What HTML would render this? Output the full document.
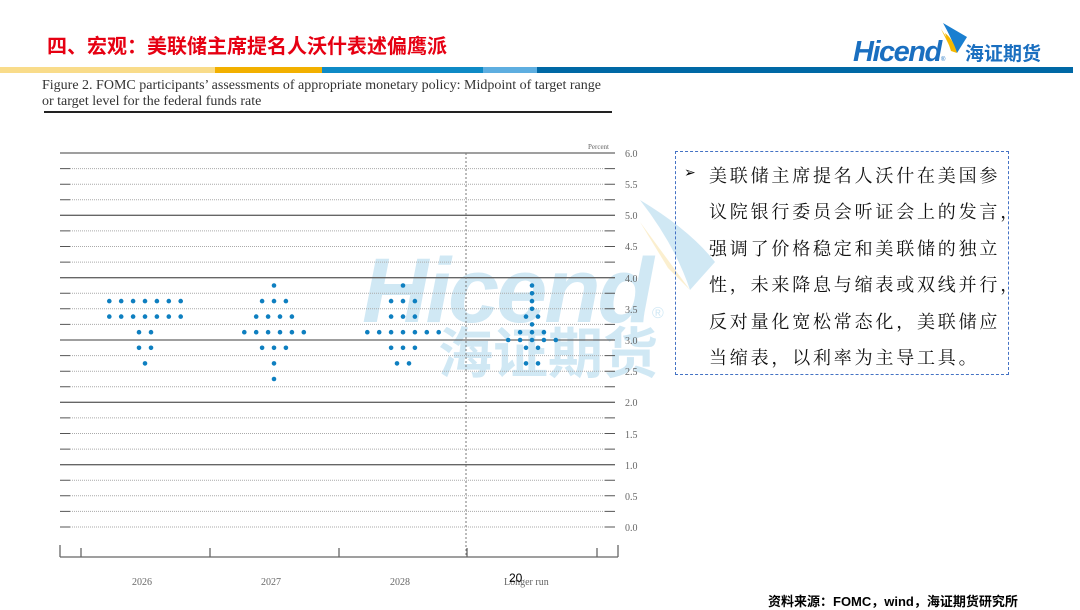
<!DOCTYPE html>
<html><head><meta charset="utf-8">
<style>
html,body{margin:0;padding:0;background:#fff;}
body{width:1080px;height:607px;position:relative;overflow:hidden;font-family:"Liberation Sans","Noto Sans CJK SC",sans-serif;}
.abs{position:absolute;}
</style></head><body>
<div class="abs" style="left:47px;top:30px;font-size:20px;font-weight:bold;color:#e60012;white-space:nowrap;">四、宏观：美联储主席提名人沃什表述偏鹰派</div>
<svg class="abs" style="left:845px;top:15px" width="220" height="55">
<path d="M98 8 L122 22 L112 38 Q106 22 98 8Z" fill="#1a7fd0"/>
<path d="M96 14 L112 38 L104 30 Q100 22 96 14Z" fill="#f5b800"/>
<path d="M100 18 Q108 24 112 38 L106 36 Z" fill="#f5b800"/>
<text x="8" y="46" font-family="Liberation Sans" font-size="29" font-style="italic" font-weight="bold" fill="#1a6fc0" letter-spacing="-1.5">Hicend</text>
<text x="96" y="46" font-size="6" fill="#1a6fc0">®</text>
<text x="120" y="45" font-family="Noto Sans CJK SC" font-size="19" font-weight="bold" fill="#1a6fc0">海证期货</text>
</svg>
<div class="abs" style="left:0;top:67px;height:6px;width:215px;background:#f9dc8a"></div>
<div class="abs" style="left:215px;top:67px;height:6px;width:107px;background:#f2b000"></div>
<div class="abs" style="left:322px;top:67px;height:6px;width:161px;background:#0e8ac6"></div>
<div class="abs" style="left:483px;top:67px;height:6px;width:54px;background:#5eaee0"></div>
<div class="abs" style="left:537px;top:67px;height:6px;width:536px;background:#0068a5"></div>
<div class="abs" style="left:42px;top:78px;font-family:'Liberation Serif',serif;font-size:14px;line-height:15.5px;color:#333;white-space:nowrap;">Figure 2. FOMC participants’ assessments of appropriate monetary policy: Midpoint of target range<br>or target level for the federal funds rate</div>
<div class="abs" style="left:44px;top:111px;width:568px;height:2px;background:#222"></div>
<svg class="abs" style="left:0;top:0" width="1080" height="607">
<g opacity="0.4">
<text x="362" y="322" font-family="Liberation Sans" font-size="92" font-style="italic" font-weight="bold" fill="#8cc6e6" letter-spacing="-3">Hicend</text>
<text x="652" y="318" font-size="16" fill="#8cc6e6">®</text>
<text x="438" y="373" font-family="Noto Sans CJK SC" font-size="55" font-weight="bold" fill="#8cc6e6">海证期货</text>
<path d="M640 200 Q690 230 715 262 L690 290 Q675 245 640 200Z" fill="#8cc6e6"/>
<path d="M640 222 L690 290 L668 268 Z" fill="#f6d889"/>
</g>
</svg>
<svg class="abs" style="left:0;top:0" width="1080" height="607" font-family="Liberation Serif">
<g stroke="#aaa" stroke-width="1" stroke-dasharray="1,1">
<line x1="70" x2="605" y1="511.4" y2="511.4"/><line x1="70" x2="605" y1="495.8" y2="495.8"/><line x1="70" x2="605" y1="480.3" y2="480.3"/><line x1="70" x2="605" y1="449.1" y2="449.1"/><line x1="70" x2="605" y1="433.5" y2="433.5"/><line x1="70" x2="605" y1="417.9" y2="417.9"/><line x1="70" x2="605" y1="386.8" y2="386.8"/><line x1="70" x2="605" y1="371.2" y2="371.2"/><line x1="70" x2="605" y1="355.6" y2="355.6"/><line x1="70" x2="605" y1="324.4" y2="324.4"/><line x1="70" x2="605" y1="308.8" y2="308.8"/><line x1="70" x2="605" y1="293.3" y2="293.3"/><line x1="70" x2="605" y1="262.1" y2="262.1"/><line x1="70" x2="605" y1="246.5" y2="246.5"/><line x1="70" x2="605" y1="230.9" y2="230.9"/><line x1="70" x2="605" y1="199.8" y2="199.8"/><line x1="70" x2="605" y1="184.2" y2="184.2"/><line x1="70" x2="605" y1="168.6" y2="168.6"/><line x1="70" x2="605" y1="527" y2="527"/>
</g>
<g stroke="#555" stroke-width="1">
<path d="M60 511.4h10M605 511.4h10M60 495.8h10M605 495.8h10M60 480.3h10M605 480.3h10M60 449.1h10M605 449.1h10M60 433.5h10M605 433.5h10M60 417.9h10M605 417.9h10M60 386.8h10M605 386.8h10M60 371.2h10M605 371.2h10M60 355.6h10M605 355.6h10M60 324.4h10M605 324.4h10M60 308.8h10M605 308.8h10M60 293.3h10M605 293.3h10M60 262.1h10M605 262.1h10M60 246.5h10M605 246.5h10M60 230.9h10M605 230.9h10M60 199.8h10M605 199.8h10M60 184.2h10M605 184.2h10M60 168.6h10M605 168.6h10M60 527h10M605 527h10"/>
</g>
<g stroke="#666" stroke-width="1.3">
<line x1="60" x2="615" y1="153" y2="153"/><line x1="60" x2="615" y1="215.3" y2="215.3"/><line x1="60" x2="615" y1="277.7" y2="277.7"/><line x1="60" x2="615" y1="340" y2="340"/><line x1="60" x2="615" y1="402.3" y2="402.3"/><line x1="60" x2="615" y1="464.7" y2="464.7"/>
</g>
<line x1="466" x2="466" y1="153" y2="557" stroke="#777" stroke-dasharray="2,2"/>
<g stroke="#666" stroke-width="1.3"><path d="M60 557H618M60 557v-12M81 557v-9M210 557v-9M339 557v-9M467 557v-9M597 557v-9M618 557v-12"/></g>
<g font-size="10" fill="#666">
<text x="625" y="157">6.0</text><text x="625" y="188">5.5</text><text x="625" y="219">5.0</text><text x="625" y="250">4.5</text><text x="625" y="282">4.0</text><text x="625" y="313">3.5</text><text x="625" y="344">3.0</text><text x="625" y="375">2.5</text><text x="625" y="406">2.0</text><text x="625" y="438">1.5</text><text x="625" y="469">1.0</text><text x="625" y="500">0.5</text><text x="625" y="531">0.0</text>
<text x="588" y="149" font-size="7">Percent</text>
<text x="132" y="585">2026</text><text x="261" y="585">2027</text><text x="390" y="585">2028</text><text x="504" y="585">Longer run</text>
</g>
<text x="509" y="582" font-size="12" font-family="Liberation Sans" fill="#000">20</text>
<g fill="#0e7fc0">
<circle cx="109.3" cy="301.1" r="2.3"/><circle cx="121.2" cy="301.1" r="2.3"/><circle cx="133.1" cy="301.1" r="2.3"/><circle cx="145" cy="301.1" r="2.3"/><circle cx="156.9" cy="301.1" r="2.3"/><circle cx="168.8" cy="301.1" r="2.3"/><circle cx="180.7" cy="301.1" r="2.3"/>
<circle cx="109.3" cy="316.6" r="2.3"/><circle cx="121.2" cy="316.6" r="2.3"/><circle cx="133.1" cy="316.6" r="2.3"/><circle cx="145" cy="316.6" r="2.3"/><circle cx="156.9" cy="316.6" r="2.3"/><circle cx="168.8" cy="316.6" r="2.3"/><circle cx="180.7" cy="316.6" r="2.3"/>
<circle cx="139" cy="332.2" r="2.3"/><circle cx="151" cy="332.2" r="2.3"/>
<circle cx="139" cy="347.8" r="2.3"/><circle cx="151" cy="347.8" r="2.3"/>
<circle cx="145" cy="363.4" r="2.3"/>
<circle cx="274" cy="285.5" r="2.3"/>
<circle cx="262.1" cy="301.1" r="2.3"/><circle cx="274" cy="301.1" r="2.3"/><circle cx="285.9" cy="301.1" r="2.3"/>
<circle cx="256.2" cy="316.6" r="2.3"/><circle cx="268.1" cy="316.6" r="2.3"/><circle cx="280" cy="316.6" r="2.3"/><circle cx="291.9" cy="316.6" r="2.3"/>
<circle cx="244.3" cy="332.2" r="2.3"/><circle cx="256.2" cy="332.2" r="2.3"/><circle cx="268.1" cy="332.2" r="2.3"/><circle cx="280" cy="332.2" r="2.3"/><circle cx="291.9" cy="332.2" r="2.3"/><circle cx="303.8" cy="332.2" r="2.3"/>
<circle cx="262.1" cy="347.8" r="2.3"/><circle cx="274" cy="347.8" r="2.3"/><circle cx="285.9" cy="347.8" r="2.3"/>
<circle cx="274" cy="363.4" r="2.3"/><circle cx="274" cy="379" r="2.3"/>
<circle cx="403" cy="285.5" r="2.3"/>
<circle cx="391.1" cy="301.1" r="2.3"/><circle cx="403" cy="301.1" r="2.3"/><circle cx="414.9" cy="301.1" r="2.3"/>
<circle cx="391.1" cy="316.6" r="2.3"/><circle cx="403" cy="316.6" r="2.3"/><circle cx="414.9" cy="316.6" r="2.3"/>
<circle cx="367.3" cy="332.2" r="2.3"/><circle cx="379.2" cy="332.2" r="2.3"/><circle cx="391.1" cy="332.2" r="2.3"/><circle cx="403" cy="332.2" r="2.3"/><circle cx="414.9" cy="332.2" r="2.3"/><circle cx="426.8" cy="332.2" r="2.3"/><circle cx="438.7" cy="332.2" r="2.3"/>
<circle cx="391.1" cy="347.8" r="2.3"/><circle cx="403" cy="347.8" r="2.3"/><circle cx="414.9" cy="347.8" r="2.3"/>
<circle cx="397" cy="363.4" r="2.3"/><circle cx="409" cy="363.4" r="2.3"/>
<circle cx="532" cy="285.5" r="2.3"/><circle cx="532" cy="293.3" r="2.3"/><circle cx="532" cy="301.1" r="2.3"/><circle cx="532" cy="308.8" r="2.3"/>
<circle cx="526" cy="316.6" r="2.3"/><circle cx="538" cy="316.6" r="2.3"/>
<circle cx="532" cy="324.4" r="2.3"/>
<circle cx="520.1" cy="332.2" r="2.3"/><circle cx="532" cy="332.2" r="2.3"/><circle cx="543.9" cy="332.2" r="2.3"/>
<circle cx="508.2" cy="340" r="2.3"/><circle cx="520.1" cy="340" r="2.3"/><circle cx="532" cy="340" r="2.3"/><circle cx="543.9" cy="340" r="2.3"/><circle cx="555.8" cy="340" r="2.3"/>
<circle cx="526" cy="347.8" r="2.3"/><circle cx="538" cy="347.8" r="2.3"/>
<circle cx="526" cy="363.4" r="2.3"/><circle cx="538" cy="363.4" r="2.3"/>
</g>
</svg>
<div class="abs" style="left:675px;top:151px;width:332px;height:222px;border:1.5px dashed #4472c4;"></div>
<div class="abs" style="left:684px;top:164px;font-size:14px;color:#000;">➢</div>
<div class="abs" style="left:709px;top:157px;width:310px;white-space:nowrap;font-family:'Noto Serif CJK SC','Noto Sans CJK SC',serif;font-size:18px;line-height:36.4px;color:#111;letter-spacing:2.8px;">美联储主席提名人沃什在美国参<br>议院银行委员会听证会上的发言，<br>强调了价格稳定和美联储的独立<br>性，未来降息与缩表或双线并行，<br>反对量化宽松常态化，美联储应<br>当缩表，以利率为主导工具。</div>
<div class="abs" style="left:768px;top:591px;font-size:13px;font-weight:bold;color:#000;white-space:nowrap;">资料来源：FOMC，wind，海证期货研究所</div>
</body></html>
